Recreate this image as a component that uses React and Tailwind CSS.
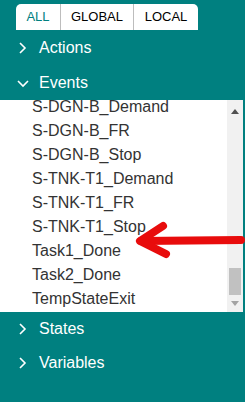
import React from "react";

const items = [
  "S-DGN-B_Demand",
  "S-DGN-B_FR",
  "S-DGN-B_Stop",
  "S-TNK-T1_Demand",
  "S-TNK-T1_FR",
  "S-TNK-T1_Stop",
  "Task1_Done",
  "Task2_Done",
  "TempStateExit",
];

function Chevron({ open }) {
  return (
    <svg width="14" height="14" viewBox="0 0 14 14" className="shrink-0">
      {open ? (
        <polyline points="2,5 7,10 12,5" fill="none" stroke="white" strokeWidth="1.6" />
      ) : (
        <polyline points="4,2 9,7 4,12" fill="none" stroke="white" strokeWidth="1.6" />
      )}
    </svg>
  );
}

function Header({ label, open, h }) {
  return (
    <div className={`flex items-center pl-[16px] gap-[9px] text-white text-[16px] ${h}`}>
      <Chevron open={open} />
      <span>{label}</span>
    </div>
  );
}

export default function App() {
  return (
    <div
      className="relative w-[245px] h-[402px] bg-[#008080] overflow-hidden"
      style={{ fontFamily: '"Liberation Sans", Arial, sans-serif' }}
    >
      <div className="pt-[4px] pl-[16px]">
        <div className="flex w-[182px] h-[26px] bg-white rounded-t-[5px] text-[13px]">
          <div className="w-[45px] flex items-center justify-center text-[#008080] border-r border-[#bdbdbd]">ALL</div>
          <div className="w-[73px] flex items-center justify-center text-black border-r border-[#bdbdbd]">GLOBAL</div>
          <div className="flex-1 flex items-center justify-center text-black">LOCAL</div>
        </div>
      </div>
      <Header label="Actions" open={false} h="h-[35px]" />
      <Header label="Events" open={true} h="h-[35px]" />
      <div className="flex w-[243px] h-[212px] bg-white">
        <div className="flex-1 overflow-hidden">
          <div className="mt-[-5px]">
            {items.map((t) => (
              <div key={t} className="h-[24px] leading-[24px] pl-[32px] text-[16px] text-[#333333] whitespace-nowrap">
                {t}
              </div>
            ))}
          </div>
        </div>
        <div className="w-[16px] bg-[#f1f1f1] flex flex-col items-center">
          <div className="h-[22px] flex items-center justify-center">
            <svg width="8" height="5" viewBox="0 0 8 5">
              <polygon points="0,5 4,0 8,5" fill="#505050" />
            </svg>
          </div>
          <div className="flex-1 w-full flex flex-col justify-end px-[2px]">
            <div className="h-[27px] bg-[#c1c1c1]" />
          </div>
          <div className="h-[17px] flex items-center justify-center">
            <svg width="8" height="5" viewBox="0 0 8 5">
              <polygon points="0,0 8,0 4,5" fill="#a3a3a3" />
            </svg>
          </div>
        </div>
      </div>
      <Header label="States" open={false} h="h-[34px]" />
      <Header label="Variables" open={false} h="h-[34px]" />

      <svg className="absolute left-0 top-0 pointer-events-none" width="245" height="402" viewBox="0 0 245 402">
        <g stroke="#e80c0c" strokeWidth="8" strokeLinecap="round" strokeLinejoin="round" fill="none">
          <line x1="141" y1="241" x2="241" y2="240" />
          <polyline points="163,226 140,241 166,254" />
        </g>
      </svg>
    </div>
  );
}
